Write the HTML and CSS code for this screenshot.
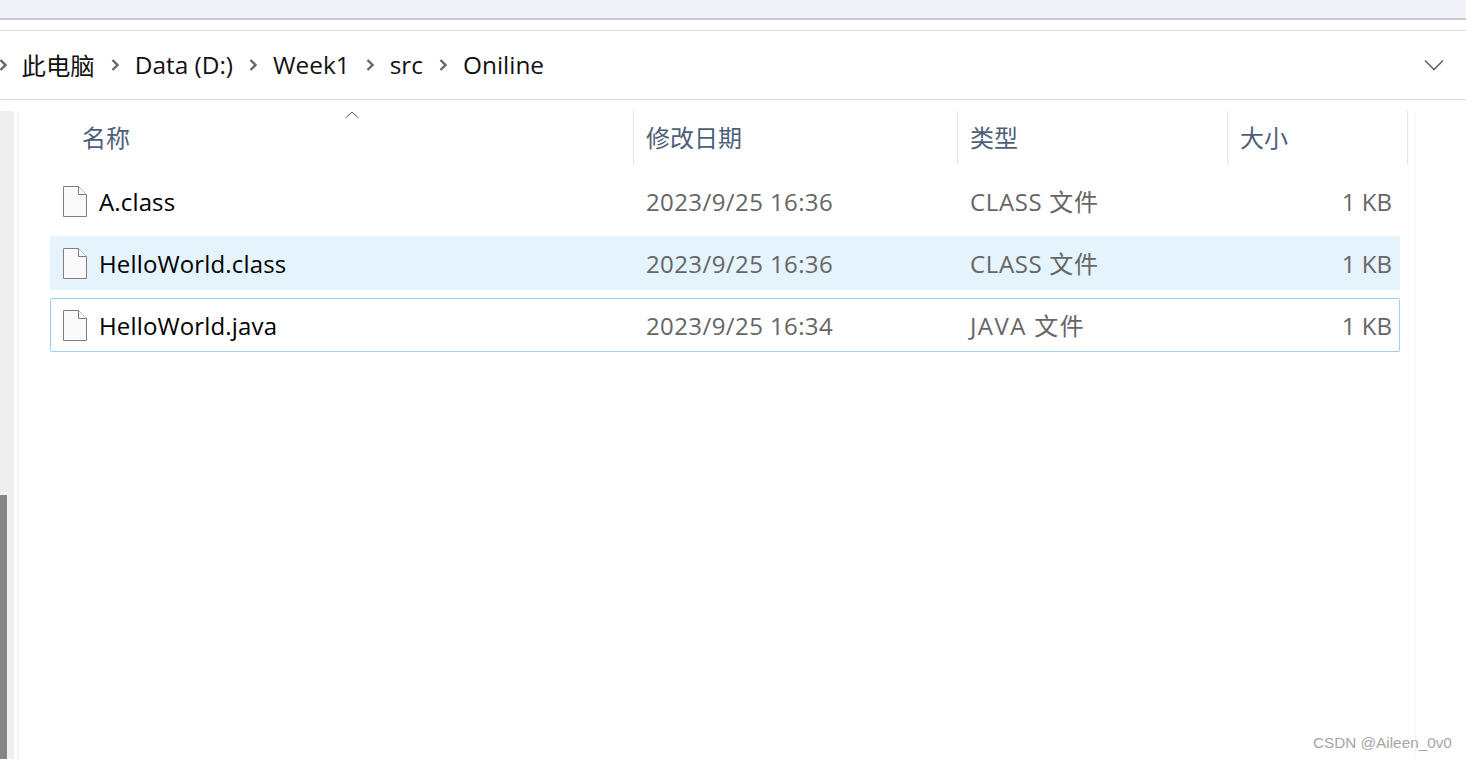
FILE: index.html
```html
<!DOCTYPE html>
<html>
<head>
    <meta charset="utf-8">
    <title>Oniline</title>
    <link rel="stylesheet" href="styles.css">
</head>
<body>
    <div class="topbar"></div>
    <nav class="crumbs">
        <svg class="sep sep-first" viewBox="0 0 8 14"><path d="M1.5 2 6.500 7l-5 5"/></svg>
        <span class="crumb">此电脑</span>
        <svg class="sep" viewBox="0 0 8 14"><path d="M1.5 2 6.500 7l-5 5"/></svg>
        <span class="crumb">Data (D:)</span>
        <svg class="sep" viewBox="0 0 8 14"><path d="M1.5 2 6.500 7l-5 5"/></svg>
        <span class="crumb">Week1</span>
        <svg class="sep" viewBox="0 0 8 14"><path d="M1.5 2 6.500 7l-5 5"/></svg>
        <span class="crumb">src</span>
        <svg class="sep" viewBox="0 0 8 14"><path d="M1.5 2 6.500 7l-5 5"/></svg>
        <span class="crumb">Oniline</span>
        <svg class="dropdown" viewBox="0 0 20 12"><path d="M1 1.500 10 10.500 19 1.500"/></svg>
    </nav>
    <main class="main">
        <div class="scrolltrack"><div class="scrollthumb"></div></div>
        <section class="files">
            <div class="head">
                <svg class="sort" viewBox="0 0 14 8"><path d="M.5 7 7 1l6.500 6"/></svg>
                <div class="hcell hname">名称</div>
                <div class="hcell">修改日期</div>
                <div class="hcell">类型</div>
                <div class="hcell">大小</div>
            </div>
            <div class="row">
                <div class="name">
                    <svg class="fileicon" viewBox="0 0 24 31"><path d="M.5.500h15l8 8v22H.5z"/><path d="M15.500.500v8h8"/></svg>
                    A.class
                </div>
                <div class="cell">2023/9/25 16:36</div>
                <div class="cell type">CLASS 文件</div>
                <div class="cell size">1 KB</div>
            </div>
            <div class="row hover">
                <div class="name">
                    <svg class="fileicon" viewBox="0 0 24 31"><path d="M.5.500h15l8 8v22H.5z"/><path d="M15.500.500v8h8"/></svg>
                    HelloWorld.class
                </div>
                <div class="cell">2023/9/25 16:36</div>
                <div class="cell type">CLASS 文件</div>
                <div class="cell size">1 KB</div>
            </div>
            <div class="row focus">
                <div class="name">
                    <svg class="fileicon" viewBox="0 0 24 31"><path d="M.5.500h15l8 8v22H.5z"/><path d="M15.500.500v8h8"/></svg>
                    HelloWorld.java
                </div>
                <div class="cell">2023/9/25 16:34</div>
                <div class="cell type java">JAVA 文件</div>
                <div class="cell size">1 KB</div>
            </div>
        </section>
    </main>
    <div class="watermark">CSDN @Aileen_0v0</div>
</body>
</html>
```

FILE: styles.css
```css
html, body {
    margin: 0;
    height: 759px;
    overflow: hidden;
    background: #fff;
    font-family: "Open Sans", "Noto Sans CJK SC", sans-serif;
}

.topbar {
    height: 18px;
    background: #f1f3f8;
    border-bottom: 2px solid #c6c9d6;
    margin-bottom: 10px;
}

.crumbs {
    height: 68px;
    border-top: 1px solid #dcdcdc;
    border-bottom: 1px solid #dcdcdc;
    display: flex;
    align-items: center;
    gap: 16px;
    font-size: 24.4px;
    color: #111;
}
.crumb {
    padding-bottom: 2px;
}
.sep {
    width: 8px;
    height: 14px;
    flex: none;
    fill: none;
    stroke: #666;
    stroke-width: 2.4;
}
.sep-first {
    margin-left: -1px;
    margin-right: -1.5px;
}
.dropdown {
    width: 20px;
    height: 12px;
    margin-left: auto;
    margin-right: 22px;
    fill: none;
    stroke: #666;
    stroke-width: 1.6;
}

.main {
    display: flex;
    height: 648px;
    margin-top: 11px;
}
.scrolltrack {
    width: 14px;
    background: #efefef;
    display: flex;
    align-items: flex-end;
}
.scrollthumb {
    width: 7px;
    height: 264px;
    background: #858585;
}

.files {
    width: 1399px;
    margin-left: 3px;
    padding-left: 31px;
    box-sizing: border-box;
    border-left: 2px solid #f5f5f5;
    border-right: 1px solid #f5f5f5;
}

.head {
    position: relative;
    display: grid;
    grid-template-columns: 583px 324px 270px 181px;
    height: 51px;
    margin-bottom: 12px;
}
.hcell {
    padding-left: 12px;
    border-left: 1px solid #e3e3e3;
    font-size: 24px;
    line-height: 53px;
    color: #4c607a;
}
.hcell:last-child {
    border-right: 1px solid #e3e3e3;
}
.hname {
    border-left: 0;
    padding-left: 32px;
}
.sort {
    position: absolute;
    left: 295px;
    top: 0;
    width: 14px;
    height: 8px;
    fill: none;
    stroke: #666;
    stroke-width: 1;
}

.row {
    display: grid;
    grid-template-columns: 583px 324px 270px 173px;
    width: 1350px;
    height: 54px;
    margin-bottom: 8px;
    align-items: center;
    font-size: 24px;
    border-radius: 2px;
}
.row.hover {
    background: #e5f3fd;
}
.row.focus {
    box-shadow: inset 0 0 0 1px #99d1f7;
}
.name {
    display: flex;
    align-items: center;
    gap: 12px;
    padding-left: 13px;
    color: #000;
    letter-spacing: .15px;
}
.fileicon {
    width: 24px;
    height: 31px;
    flex: none;
    fill: #fafafa;
    stroke: #7f7f7f;
}
.cell {
    padding-left: 13px;
    color: #666;
    letter-spacing: .4px;
}
.cell.type {
    padding-bottom: 2px;
    letter-spacing: .65px;
}
.cell.java {
    letter-spacing: 1.4px;
}
.cell.size {
    padding: 0 8px 0 0;
    text-align: right;
    letter-spacing: 0;
}

.watermark {
    position: absolute;
    left: 1313px;
    top: 734px;
    font-family: "Liberation Sans", sans-serif;
    font-size: 15.3px;
    line-height: 17px;
    color: #a6a6a6;
}
```
